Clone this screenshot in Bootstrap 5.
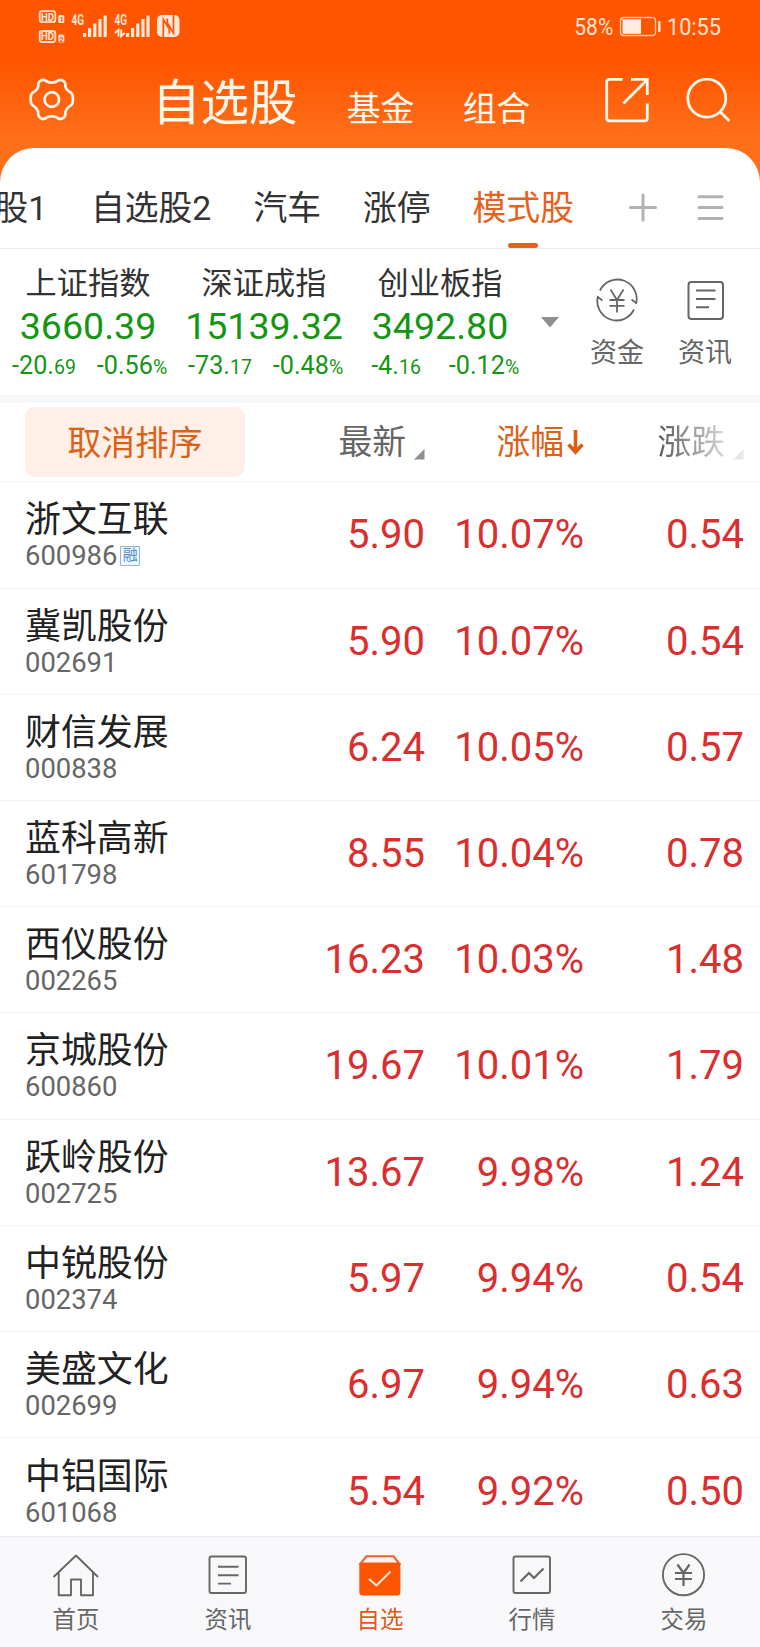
<!DOCTYPE html>
<html lang="zh-CN">
<head>
<meta charset="utf-8">
<meta name="viewport" content="width=device-width, initial-scale=1">
<title>自选股</title>
<link href="https://cdn.jsdelivr.net/npm/bootstrap@5.3.0/dist/css/bootstrap.min.css" rel="stylesheet">
<style>
  body { font-family: Roboto, "Noto Sans CJK SC", sans-serif; color: #333; background: #fff; }
  svg { display: block; flex: none; }
  .app { width: 760px; height: 1647px; }
  .top-area { background: linear-gradient(#ff5500 0, #ff5500 62px, #ff6e19 135px, #ff6e19 100%); height: 182px; }
  .status-bar { height: 54px; padding: 0 36px 0 38px; }
  .title-bar { height: 94px; color: #fff8ec; padding: 0 29px 0 29px; }
  .title-main { font-size: 48.5px; line-height: 94px; margin-left: 77px; padding-top: 3px; }
  .title-sub { font-size: 33.8px; line-height: 94px; padding-top: 9px; }
  .sheet { margin-top: -34px; border-radius: 34px 34px 0 0; background: #fff; min-height: 0; }
  .tabs { height: 101px; border-bottom: 1px solid #ececee; font-size: 33.8px; line-height: 34px; padding-top: 44px; }
  .tabs .tab-current { color: #e8601c; }
  .tab-current::after { content: ""; position: absolute; left: 50%; bottom: 0; width: 30px; height: 5px; margin-left: -15px; border-radius: 3px; background: #e8601c; }
  .indices { height: 154px; border-bottom: 8px solid #f6f7f9; padding-top: 16px; }
  .index-item { width: 176px; color: #149514; }
  .index-name { font-size: 31.2px; line-height: 37px; color: #333; }
  .index-value { font-size: 37.6px; line-height: 48px; }
  .index-delta { font-size: 25.2px; line-height: 32px; }
  .index-delta .fraction { font-size: 19.5px; }
  .index-delta > span { width: 88px; white-space: nowrap; }
  .shortcut { width: 88px; font-size: 27px; line-height: 34px; color: #666; }
  .quote-row { height: 106.2px; border-bottom: 1px solid #f1f2f4; padding: 0 16px 0 25px; }
  .quote-head { height: 79.4px; font-size: 33.8px; line-height: 80px; color: #666; }
  .sort-btn { width: 220px; height: 70px; border-radius: 10px; background: #ffefe6; color: #d96218; font-size: 33.8px; line-height: 34px; padding: 3px 0 0; border: 0; }
  .stock-name { font-size: 35.9px; line-height: 42px; color: #222; padding-top: 1px; }
  .stock-code { font-size: 27.4px; line-height: 30px; color: #666; }
  .margin-tag { width: 20px; height: 20px; border: 1.5px solid #8fb6da; background: #f1f8fe; color: #4f8dc9; font-size: 15px; line-height: 17px; margin-left: 3px; border-radius: 1px; }
  .num { font-size: 40px; color: #d92f2f; text-align: right; padding-top: 1px; }
  .w-price { width: 170px; } .w-pct { width: 159px; } .w-chg { width: 160px; }
  .text-fade { background: linear-gradient(90deg, #555, #dadada); -webkit-background-clip: text; background-clip: text; color: transparent; }
  .bottom-nav { height: 111px; background: #f8f8fa; border-top: 1px solid #ebecee; font-size: 23.4px; line-height: 30px; color: #666; }
  .bottom-nav .on { color: #e0591b; }
</style>
</head>
<body>
<div class="app d-flex flex-column overflow-hidden">
  <header class="top-area flex-shrink-0">
    <div class="status-bar d-flex align-items-start justify-content-between">
      <svg width="144" height="54" viewBox="38 0 144 54" fill="#ffe8d8" font-family="Roboto" font-weight="700">
        <g fill="none" stroke="#ffe0cc" stroke-width="1.8"><rect x="39.7" y="11.2" width="15.600" height="11" rx="2.500"/><rect x="39.700" y="31" width="15.600" height="11" rx="2.500"/></g>
        <text x="41" y="20.600" font-size="11" textLength="13" lengthAdjust="spacingAndGlyphs">HD</text>
        <text x="41" y="40.400" font-size="11" textLength="13" lengthAdjust="spacingAndGlyphs">HD</text>
        <rect x="58.300" y="15" width="6" height="8" rx="1.500"/><rect x="58.300" y="34.500" width="6" height="8" rx="1.500"/>
        <text x="59.400" y="22" font-size="7.500" fill="#ff5500">1</text><text x="59.200" y="41.500" font-size="7.500" fill="#ff5500">2</text>
        <text x="71.500" y="25" font-size="14" textLength="12.500" lengthAdjust="spacingAndGlyphs">4G</text>
        <text x="114.500" y="25" font-size="14" textLength="12.500" lengthAdjust="spacingAndGlyphs">4G</text>
        <path d="M83 33h3.200v4H83zM88 28h3.200v9H88zM93.200 23.500h3.200v13.500h-3.200zM98.400 19h3.200v18h-3.200zM103.600 15.500h3.200v21.500h-3.200z"/>
        <path d="M126 33h3.200v4H126zM131 28h3.200v9H131zM136.200 23.500h3.200v13.500h-3.200zM141.400 19h3.200v18h-3.200zM146.400 15.500h3.200v21.500h-3.200z"/>
        <path d="M115 33l3.500-3v6.500M121.200 29.500v6.500l3.500-3" fill="none" stroke="#ffe8d8" stroke-width="2"/>
        <rect x="157" y="15" width="22.500" height="22" rx="5"/>
        <path d="M163.300 37V19.500L169.300 29V33.500M173.500 15V33L167.300 23V18.500" fill="none" stroke="#ff5500" stroke-width="1.700"/>
      </svg>
      <svg width="152" height="54" viewBox="572 0 152 54" fill="#ffe3d0" font-family="Roboto" font-size="24.500">
        <text x="574.300" y="35.400" textLength="39" lengthAdjust="spacingAndGlyphs">58%</text>
        <rect x="620.500" y="17.500" width="35" height="18" rx="3" fill="none" stroke="#ffc9a8" stroke-width="1.300"/>
        <rect x="622.500" y="19.300" width="18.500" height="14.500" fill="#ffece0"/>
        <rect x="658" y="21" width="2.600" height="11" rx="1"/>
        <text x="667" y="35.400" textLength="54" lengthAdjust="spacingAndGlyphs">10:55</text>
      </svg>
    </div>
    <div class="title-bar d-flex align-items-start">
      <svg class="mt-4" width="46" height="46" viewBox="29 78 46 46" fill="none" stroke="#fff8ec" stroke-width="2.700" stroke-linejoin="round">
        <path d="M45 80.400Q51.800 85 58.600 80.400Q60.500 79.300 62.300 80.300L64 81.500Q65.600 82.800 65.300 85.200Q65.500 89.800 70.800 92.500Q72.300 93.600 72.600 95.500Q73.200 99 72.600 102.500Q72.300 104.300 70.800 105.400Q65.500 108.700 65.300 113.400Q65.600 115.800 64 117.200L62.300 118.500Q60.500 119.600 58.600 118.500Q51.800 114 45 118.500Q43.100 119.600 41.300 118.500L39.600 117.200Q38 115.800 38.300 113.400Q38.100 108.700 32.800 105.400Q31.300 104.300 31 102.500Q30.400 99 31 95.500Q31.300 93.600 32.800 92.500Q38.100 89.800 38.300 85.200Q38 82.800 39.600 81.500L41.300 80.300Q43.100 79.300 45 80.400Z"/>
        <circle cx="51.800" cy="99.500" r="7.300"/>
      </svg>
      <span class="title-main">自选股</span>
      <span class="title-sub" style="margin-left:49.300px">基金</span>
      <span class="title-sub" style="margin-left:48.400px">组合</span>
      <svg class="ms-auto mt-4" width="126" height="46" viewBox="605 78 126 46" fill="none" stroke="#fff8ec" stroke-width="2.800">
        <path d="M622.600 79.400H609.500Q606.700 79.400 606.700 82.200V118Q606.700 120.800 609.500 120.800H644.500Q647.300 120.800 647.300 118V103.500M631 79.400H647.300V95M646.500 80.500L623.300 103.500"/>
        <circle cx="706.800" cy="98.200" r="19"/><path d="M719.500 111.200L729.500 121"/>
      </svg>
    </div>
  </header>

  <main class="sheet d-flex flex-column flex-grow-1 overflow-hidden position-relative">
    <nav class="tabs d-flex flex-shrink-0 text-nowrap">
      <span style="margin-left:-5.500px">股1</span>
      <span style="margin-left:43.700px">自选股2</span>
      <span style="margin-left:42px">汽车</span>
      <span style="margin-left:42px">涨停</span>
      <span class="tab-current position-relative" style="margin-left:42px">模式股</span>
      <svg style="margin-left:53.600px" width="96" height="34" viewBox="627 191 96 34" stroke="#b2b2b4" stroke-width="3" stroke-linecap="round"><path d="M629.500 206.600H654.500M642 194V219M698 195.700H721M698 206.600H721M698 217.500H721"/></svg>
    </nav>

    <section class="indices d-flex flex-shrink-0 text-center">
      <div class="index-item"><div class="index-name">上证指数</div><div class="index-value">3660.39</div><div class="index-delta d-flex"><span>-20.<span class="fraction">69</span></span><span>-0.56<span class="fraction">%</span></span></div></div>
      <div class="index-item"><div class="index-name">深证成指</div><div class="index-value">15139.32</div><div class="index-delta d-flex"><span>-73.<span class="fraction">17</span></span><span>-0.48<span class="fraction">%</span></span></div></div>
      <div class="index-item"><div class="index-name">创业板指</div><div class="index-value">3492.80</div><div class="index-delta d-flex"><span>-4.<span class="fraction">16</span></span><span>-0.12<span class="fraction">%</span></span></div></div>
      <svg style="margin:52px 13px 0" width="18" height="11" viewBox="0 0 18 11" fill="#8e8e93"><path d="M0 0H18L9 10.500Z"/></svg>
      <div class="shortcut" style="margin-left:1px">
        <svg class="mx-auto" style="margin-top:13px" width="42" height="44" viewBox="-21 -22 42 44" fill="none" stroke="#666" stroke-width="1.800">
          <path d="M-17 -9.500A19.300 19.300 0 0 1 19 4M19.300 3L14.500 -.500M17 9.500A19.300 19.300 0 0 1 -19 -4M-19.300 -3L-14.500 .500M-6.500 -10.500L0 0L6.500 -10.500M0 0V12.500M-7.500 0H7.500M-7.500 5.800H7.500"/>
        </svg>
        <div style="margin-top:14px">资金</div>
      </div>
      <div class="shortcut">
        <svg class="mx-auto" style="margin-top:13px" width="42" height="44" viewBox="-21 -22 42 44" fill="none" stroke="#666" stroke-width="2">
          <rect x="-16.500" y="-18" width="34.500" height="37" rx="3"/><path d="M-9 -9.500H10.500M-9 -1H10.500M-9 7.300H4"/>
        </svg>
        <div style="margin-top:14px">资讯</div>
      </div>
    </section>

    <section class="d-flex flex-column">
      <div class="quote-row quote-head d-flex flex-shrink-0">
        <div class="flex-grow-1 d-flex align-items-center"><button class="sort-btn btn" type="button">取消排序</button></div>
        <div class="w-price d-flex justify-content-end"><span>最新</span><svg style="margin:46px 0 0 8px" width="11" height="11" fill="#8e8e93"><path d="M0 10.500L10.500 0V10.500Z"/></svg></div>
        <div class="w-pct d-flex justify-content-end" style="color:#d96218"><span>涨幅</span><svg style="margin:26px 0 0 3px" width="17" height="26" viewBox="0 0 17 26" fill="none" stroke="#e05a10" stroke-width="3.600"><path d="M8.500 1V23M1.500 15.500L8.500 23L15.500 15.500"/></svg></div>
        <div class="w-chg d-flex justify-content-end"><span class="text-fade">涨跌</span><svg style="margin:46px 0 0 8px" width="11" height="11" fill="#e8e8ea"><path d="M0 10.500L10.500 0V10.500Z"/></svg></div>
      </div>
      <div class="quote-row d-flex flex-shrink-0 align-items-center"><div class="flex-grow-1"><div class="stock-name">浙文互联</div><div class="stock-code d-flex align-items-center">600986<span class="margin-tag text-center">融</span></div></div><div class="num w-price">5.90</div><div class="num w-pct">10.07%</div><div class="num w-chg">0.54</div></div>
      <div class="quote-row d-flex flex-shrink-0 align-items-center"><div class="flex-grow-1"><div class="stock-name">冀凯股份</div><div class="stock-code">002691</div></div><div class="num w-price">5.90</div><div class="num w-pct">10.07%</div><div class="num w-chg">0.54</div></div>
      <div class="quote-row d-flex flex-shrink-0 align-items-center"><div class="flex-grow-1"><div class="stock-name">财信发展</div><div class="stock-code">000838</div></div><div class="num w-price">6.24</div><div class="num w-pct">10.05%</div><div class="num w-chg">0.57</div></div>
      <div class="quote-row d-flex flex-shrink-0 align-items-center"><div class="flex-grow-1"><div class="stock-name">蓝科高新</div><div class="stock-code">601798</div></div><div class="num w-price">8.55</div><div class="num w-pct">10.04%</div><div class="num w-chg">0.78</div></div>
      <div class="quote-row d-flex flex-shrink-0 align-items-center"><div class="flex-grow-1"><div class="stock-name">西仪股份</div><div class="stock-code">002265</div></div><div class="num w-price">16.23</div><div class="num w-pct">10.03%</div><div class="num w-chg">1.48</div></div>
      <div class="quote-row d-flex flex-shrink-0 align-items-center"><div class="flex-grow-1"><div class="stock-name">京城股份</div><div class="stock-code">600860</div></div><div class="num w-price">19.67</div><div class="num w-pct">10.01%</div><div class="num w-chg">1.79</div></div>
      <div class="quote-row d-flex flex-shrink-0 align-items-center"><div class="flex-grow-1"><div class="stock-name">跃岭股份</div><div class="stock-code">002725</div></div><div class="num w-price">13.67</div><div class="num w-pct">9.98%</div><div class="num w-chg">1.24</div></div>
      <div class="quote-row d-flex flex-shrink-0 align-items-center"><div class="flex-grow-1"><div class="stock-name">中锐股份</div><div class="stock-code">002374</div></div><div class="num w-price">5.97</div><div class="num w-pct">9.94%</div><div class="num w-chg">0.54</div></div>
      <div class="quote-row d-flex flex-shrink-0 align-items-center"><div class="flex-grow-1"><div class="stock-name">美盛文化</div><div class="stock-code">002699</div></div><div class="num w-price">6.97</div><div class="num w-pct">9.94%</div><div class="num w-chg">0.63</div></div>
      <div class="quote-row d-flex flex-shrink-0 align-items-center border-0"><div class="flex-grow-1"><div class="stock-name">中铝国际</div><div class="stock-code">601068</div></div><div class="num w-price">5.54</div><div class="num w-pct">9.92%</div><div class="num w-chg">0.50</div></div>
    </section>
  </main>

  <nav class="bottom-nav d-flex flex-shrink-0 text-center">
    <div class="col"><svg class="mx-auto mt-3" width="48" height="48" viewBox="52 1552 48 48" fill="none" stroke="#666" stroke-width="1.900" stroke-linejoin="round"><path d="M53.500 1576L76 1554.500L98 1576M58.700 1571.500V1594.300H71V1578.500H81V1594.300H93V1571.500"/></svg><div class="mt-1">首页</div></div>
    <div class="col"><svg class="mx-auto mt-3" width="48" height="48" viewBox="204 1552 48 48" fill="none" stroke="#666" stroke-width="1.900"><rect x="209.500" y="1555.500" width="36.500" height="36.500" rx="2"/><path d="M218 1565.700H238.500M218 1574.200H238.500M218 1582.600H231"/></svg><div class="mt-1">资讯</div></div>
    <div class="col on"><svg class="mx-auto mt-3" width="48" height="48" viewBox="356 1552 48 48"><path d="M366.500 1555.300H393.500L399.300 1562.500H360.500Z" fill="#fff2ea" stroke="#e8632a" stroke-width="2"/><path d="M359.300 1562H400.400V1591Q400.400 1594.500 397 1594.500H363Q359.300 1594.500 359.300 1591Z" fill="#ff5500"/><path d="M369 1578L376.500 1584.500L390.500 1570.500" fill="none" stroke="#ffece0" stroke-width="2"/></svg><div class="mt-1">自选</div></div>
    <div class="col"><svg class="mx-auto mt-3" width="48" height="48" viewBox="508 1552 48 48" fill="none" stroke="#666" stroke-width="1.900"><rect x="513.500" y="1555.500" width="36.500" height="36.500" rx="2"/><path stroke-width="2.200" d="M520.500 1580.500L529 1572L534 1577L543.500 1567.500"/></svg><div class="mt-1">行情</div></div>
    <div class="col"><svg class="mx-auto mt-3" width="48" height="48" viewBox="660 1552 48 48" fill="none" stroke="#666" stroke-width="1.900"><circle cx="683.500" cy="1573.700" r="20.600"/><path d="M677.500 1563.500L683.500 1572L689.500 1563.500M683.500 1572V1585M675 1572H692M675 1578H692" stroke-width="2.200"/></svg><div class="mt-1">交易</div></div>
  </nav>
</div>
<script src="https://cdn.jsdelivr.net/npm/bootstrap@5.3.0/dist/js/bootstrap.bundle.min.js"></script>
</body>
</html>
